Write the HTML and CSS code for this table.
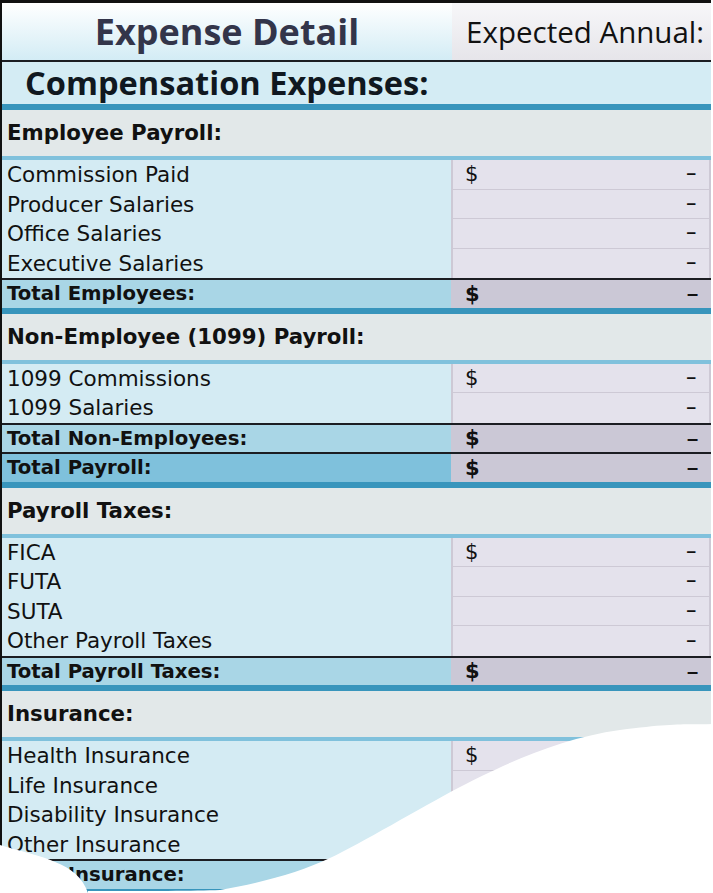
FILE: index.html
```html
<!DOCTYPE html>
<html>
<head>
<meta charset="utf-8">
<link rel="stylesheet" href="styles.css">
</head>
<body>
<div class="sheet">
  <div class="head">
    <div class="head-l">Expense Detail</div>
    <div class="head-r">Expected Annual:</div>
  </div>
  <div class="rule-black"></div>
  <div class="band">Compensation Expenses:</div>
  <div class="rule-thick"></div>

  <div class="group">Employee Payroll:</div>
  <div class="rule-light"></div>
  <div class="item"><div class="lbl">Commission Paid</div><div class="val"><span class="cur">$</span><span class="dash">–</span></div></div>
  <div class="item"><div class="lbl">Producer Salaries</div><div class="val"><span class="cur"></span><span class="dash">–</span></div></div>
  <div class="item"><div class="lbl">Office Salaries</div><div class="val"><span class="cur"></span><span class="dash">–</span></div></div>
  <div class="item last"><div class="lbl">Executive Salaries</div><div class="val"><span class="cur"></span><span class="dash">–</span></div></div>
  <div class="rule-black"></div>
  <div class="total"><div class="lbl">Total Employees:</div><div class="val"><span class="cur">$</span><span class="dash">–</span></div></div>
  <div class="rule-thick"></div>

  <div class="group">Non-Employee (1099) Payroll:</div>
  <div class="rule-light"></div>
  <div class="item"><div class="lbl">1099 Commissions</div><div class="val"><span class="cur">$</span><span class="dash">–</span></div></div>
  <div class="item last"><div class="lbl">1099 Salaries</div><div class="val"><span class="cur"></span><span class="dash">–</span></div></div>
  <div class="rule-black"></div>
  <div class="total"><div class="lbl">Total Non-Employees:</div><div class="val"><span class="cur">$</span><span class="dash">–</span></div></div>
  <div class="rule-black"></div>
  <div class="total grand"><div class="lbl">Total Payroll:</div><div class="val"><span class="cur">$</span><span class="dash">–</span></div></div>
  <div class="rule-thick"></div>

  <div class="group">Payroll Taxes:</div>
  <div class="rule-light"></div>
  <div class="item"><div class="lbl">FICA</div><div class="val"><span class="cur">$</span><span class="dash">–</span></div></div>
  <div class="item"><div class="lbl">FUTA</div><div class="val"><span class="cur"></span><span class="dash">–</span></div></div>
  <div class="item"><div class="lbl">SUTA</div><div class="val"><span class="cur"></span><span class="dash">–</span></div></div>
  <div class="item last"><div class="lbl">Other Payroll Taxes</div><div class="val"><span class="cur"></span><span class="dash">–</span></div></div>
  <div class="rule-black"></div>
  <div class="total"><div class="lbl">Total Payroll Taxes:</div><div class="val"><span class="cur">$</span><span class="dash">–</span></div></div>
  <div class="rule-thick"></div>

  <div class="group">Insurance:</div>
  <div class="rule-light"></div>
  <div class="item"><div class="lbl">Health Insurance</div><div class="val"><span class="cur">$</span><span class="dash">–</span></div></div>
  <div class="item"><div class="lbl">Life Insurance</div><div class="val"><span class="cur"></span><span class="dash">–</span></div></div>
  <div class="item"><div class="lbl">Disability Insurance</div><div class="val"><span class="cur"></span><span class="dash">–</span></div></div>
  <div class="item last"><div class="lbl">Other Insurance</div><div class="val"><span class="cur"></span><span class="dash">–</span></div></div>
  <div class="rule-black"></div>
  <div class="total"><div class="lbl">Total Insurance:</div><div class="val"><span class="cur">$</span><span class="dash">–</span></div></div>
  <div class="rule-thick"></div>
</div>
<svg class="tear" width="713" height="893" viewBox="0 0 713 893" aria-hidden="true">
  <path d="M0,845 C40,857 78,862 88,893 L88,891 C150,891 195,891 220,890 C265,882 300,872 330,858 S420,808 460,787 S560,738 620,730 S690,725 713,724 L713,893 L0,893 Z" fill="#ffffff"/>
</svg>
</body>
</html>
```
FILE: styles.css
```css
html, body {
  margin: 0;
  padding: 0;
  background: #ffffff;
}
body {
  width: 713px;
  height: 893px;
  overflow: hidden;
  position: relative;
  font-family: "DejaVu Sans", sans-serif;
  color: #111111;
}
.sheet {
  width: 709px;
  border-top: 3px solid #111111;
  border-left: 2px solid #111111;
}
.head {
  display: grid;
  grid-template-columns: 450px 259px;
  height: 57px;
}
.head-l {
  background: linear-gradient(#ffffff, #d3ecf5);
  font-family: "Open Sans", sans-serif;
  font-weight: 700;
  font-size: 36px;
  color: #33354a;
  text-align: center;
  line-height: 57px;
}
.head-r {
  background: linear-gradient(#f7f7f9, #e6e5ea);
  font-family: "Open Sans", sans-serif;
  font-size: 29.5px;
  color: #111111;
  text-align: right;
  padding-right: 7px;
  line-height: 57px;
  white-space: nowrap;
}
.rule-black {
  height: 2px;
  background: #1b1d22;
}
.rule-thick {
  height: 6px;
  background: #3895bc;
}
.rule-light {
  height: 4px;
  background: #80c1dc;
}
.band {
  height: 42px;
  background: #d4ecf4;
  font-family: "Open Sans", sans-serif;
  font-weight: 700;
  font-size: 32.6px;
  line-height: 42px;
  padding-left: 23px;
  color: #101820;
  white-space: nowrap;
}
.group {
  height: 46px;
  background: #e2e8e9;
  font-weight: 700;
  font-size: 21.3px;
  line-height: 46px;
  padding-left: 5px;
}
.item, .total {
  display: grid;
  grid-template-columns: 449px 260px;
}
.item {
  height: 29.5px;
  font-size: 21.5px;
}
.item .lbl {
  background: #d4ebf3;
  padding-left: 5px;
  line-height: 29.5px;
  white-space: nowrap;
}
.item .val {
  background: #e4e2ec;
  border-left: 2px solid #cdc9d5;
  border-right: 2px solid #cdc9d5;
  border-bottom: 1.5px solid #cdc9d5;
  box-sizing: border-box;
}
.item.last .val {
  border-bottom: none;
}
.val {
  display: flex;
  justify-content: space-between;
  align-items: center;
  padding-left: 12px;
  padding-right: 13px;
}
.total .val {
  padding-left: 14px;
  padding-right: 13px;
}
.cur {
  font-size: 21px;
}
.dash {
  font-size: 17px;
  font-family: "Liberation Sans", sans-serif;
  font-weight: 700;
}
.total .dash {
  font-size: 20px;
}
.total {
  height: 27.5px;
  font-size: 19.7px;
  font-weight: 700;
}
.total .lbl {
  background: #a9d6e6;
  padding-left: 5px;
  line-height: 27.5px;
  white-space: nowrap;
}
.total .val {
  background: #cbc8d6;
}
.total.grand .lbl {
  background: #7fc1dc;
}
.tear {
  position: absolute;
  left: 0;
  top: 0;
}
```
